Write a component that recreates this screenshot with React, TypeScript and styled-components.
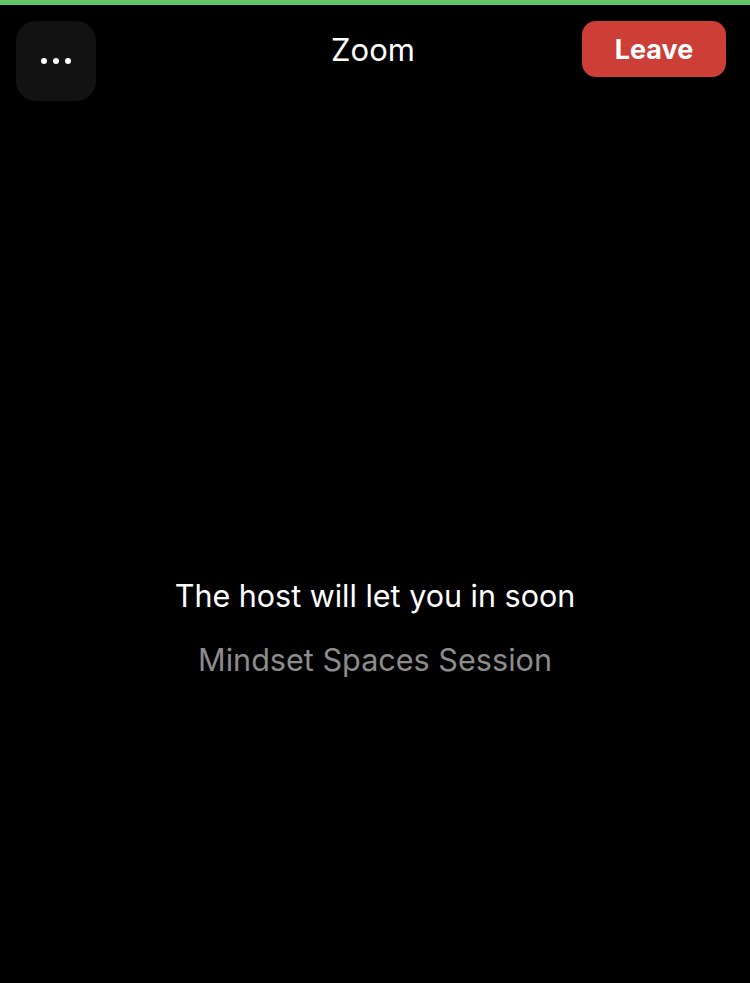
import React from 'react'
import styled, { createGlobalStyle } from 'styled-components'

const GlobalStyle = createGlobalStyle`
  html, body {
    margin: 0;
    padding: 0;
    background: #000;
  }
  body {
    font-family: Inter, "Noto Sans", "Liberation Sans", sans-serif;
    -webkit-font-smoothing: antialiased;
  }
`

const Screen = styled('div')`
  width: 750px;
  height: 983px;
  background: #000;
  display: flex;
  flex-direction: column;
  overflow: hidden;
`

const StatusLine = styled('div')`
  height: 5px;
  background: #64c566;
  flex-shrink: 0;
`

const TopBar = styled('div')`
  display: grid;
  grid-template-columns: 1fr auto 1fr;
  align-items: start;
  padding: 16px 24px 0 16px;
`

const MenuButton = styled('button')`
  width: 80px;
  height: 80px;
  border: none;
  border-radius: 20px;
  background: #121212;
  display: flex;
  align-items: center;
  justify-content: center;
  gap: 6px;
  padding: 0;
  justify-self: start;
`

const Dot = styled('span')`
  width: 6px;
  height: 6px;
  border-radius: 50%;
  background: #fff;
`

const Title = styled('div')`
  color: #fff;
  font-size: 31px;
  font-weight: 400;
  line-height: 1;
  margin-top: 13px;
  margin-left: 4px;
`

const LeaveButton = styled('button')`
  justify-self: end;
  width: 144px;
  height: 56px;
  border: none;
  border-radius: 14px;
  background: #cc3e36;
  color: #fff;
  font-family: Inter, "Noto Sans", sans-serif;
  font-size: 27px;
  font-weight: 700;
  padding: 0;
`

const Waiting = styled('div')`
  display: flex;
  flex-direction: column;
  align-items: center;
  padding-top: 475px;
  gap: 24px;
`

const Message = styled('div')`
  color: #fff;
  font-size: 30.5px;
  line-height: 40px;
`

const Meeting = styled('div')`
  color: #8c8c8c;
  font-size: 30.6px;
  line-height: 40px;
`

export default function App() {
  return (
    <>
      <GlobalStyle />
      <Screen>
        <StatusLine />
        <TopBar>
          <MenuButton aria-label="More">
            <Dot />
            <Dot />
            <Dot />
          </MenuButton>
          <Title>Zoom</Title>
          <LeaveButton>Leave</LeaveButton>
        </TopBar>
        <Waiting>
          <Message>The host will let you in soon</Message>
          <Meeting>Mindset Spaces Session</Meeting>
        </Waiting>
      </Screen>
    </>
  )
}
